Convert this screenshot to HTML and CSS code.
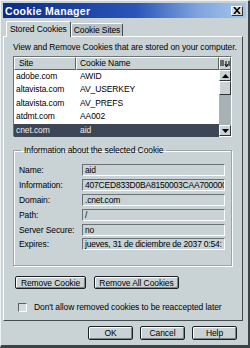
FILE: index.html
```html
<!DOCTYPE html>
<html lang="en">
  <head>
    <meta charset="UTF-8" />
    <meta name="viewport" content="width=device-width, initial-scale=1.0" />
    <title>Cookie Manager</title>

    <link rel="stylesheet" href="styles.css">
  </head>
  <body>
    <div class="window">
      <div class="titlebar">
        <span class="title">Cookie Manager</span>
        <span class="close">
          <svg width="8" height="7" viewBox="0 0 8 7">
            <path d="M1 0 L7 7 M7 0 L1 7" stroke="#000" stroke-width="1.6" />
          </svg>
        </span>
      </div>

      <div class="tabs">
        <div class="tab active">Stored Cookies</div>
        <div class="tab">Cookie Sites</div>
      </div>

      <div class="panel">
        <p class="intro">View and Remove Cookies that are stored on your computer.</p>

        <div class="list">
          <div class="rows">
            <div class="head">
              <span class="c1">Site</span>
              <span class="c2">Cookie Name</span>
            </div>
            <div class="row"><span class="c1">adobe.com</span><span class="c2">AWID</span></div>
            <div class="row"><span class="c1">altavista.com</span><span class="c2">AV_USERKEY</span></div>
            <div class="row"><span class="c1">altavista.com</span><span class="c2">AV_PREFS</span></div>
            <div class="row"><span class="c1">atdmt.com</span><span class="c2">AA002</span></div>
            <div class="row selected"><span class="c1">cnet.com</span><span class="c2">aid</span></div>
          </div>
          <div class="side">
            <div class="picker">
              <svg width="10" height="8" viewBox="0 0 10 8">
                <path d="M0 1 H4 M0 3 H4 M0 5 H4 M6 1 V6 M9 1 V6 M5 4 L6.5 7 L8 4" stroke="#000" stroke-width="1" fill="none" />
              </svg>
            </div>
            <div class="scroll">
              <div class="arrow">
                <svg width="7" height="4" viewBox="0 0 7 4"><path d="M0 4 L3.5 0 L7 4 Z" /></svg>
              </div>
              <div class="thumb"></div>
              <div class="track"></div>
              <div class="arrow">
                <svg width="7" height="4" viewBox="0 0 7 4"><path d="M0 0 L3.5 4 L7 0 Z" /></svg>
              </div>
            </div>
          </div>
        </div>

        <fieldset class="info">
          <legend>Information about the selected Cookie</legend>
          <div class="field"><span>Name:</span><div class="box">aid</div></div>
          <div class="field"><span>Information:</span><div class="box">407CED833D0BA8150003CAA70000000</div></div>
          <div class="field"><span>Domain:</span><div class="box">.cnet.com</div></div>
          <div class="field"><span>Path:</span><div class="box">/</div></div>
          <div class="field"><span>Server Secure:</span><div class="box">no</div></div>
          <div class="field"><span>Expires:</span><div class="box">jueves, 31 de diciembre de 2037 0:54:</div></div>
        </fieldset>

        <div class="actions">
          <button class="btn wide1">Remove Cookie</button>
          <button class="btn wide2">Remove All Cookies</button>
        </div>

        <label class="check"><span class="tick"></span>Don't allow removed cookies to be reaccepted later</label>
      </div>

      <div class="footer">
        <button class="btn small">OK</button>
        <button class="btn small">Cancel</button>
        <button class="btn small">Help</button>
      </div>
    </div>
  </body>
</html>
```

FILE: styles.css
```css
* {
  box-sizing: border-box;
}
body {
  margin: 0;
  font-family: "Liberation Sans", Arial, sans-serif;
  font-size: 8.5px;
  letter-spacing: -0.1px;
  color: #000;
  background: #c9d3d6;
}
.window {
  width: 250px;
  height: 348px;
  padding: 2px 2px 3px 2px;
  background: #c9d3d6;
  border-left: 1px solid #eef2f3;
  border-top: 1px solid #eef2f3;
  border-right: 2px solid #3c4448;
  border-bottom: 3px solid #3c4448;
}
.titlebar {
  height: 15px;
  display: flex;
  align-items: center;
  justify-content: space-between;
  padding: 0 3px 0 2px;
  background: linear-gradient(to right, #0c2c86 0%, #2a56b8 55%, #7ea4de 80%, #a8c4ec 100%);
}
.title {
  color: #fff;
  font-weight: bold;
  font-size: 10.5px;
  letter-spacing: 0.3px;
}
.close {
  width: 12px;
  height: 10px;
  display: flex;
  align-items: center;
  justify-content: center;
  background: #d4dadc;
  border: 1px solid;
  border-color: #fff #333 #333 #fff;
}
.tabs {
  display: flex;
  align-items: flex-end;
  height: 17px;
  padding-left: 3px;
  margin-top: 1px;
}
.tab {
  height: 13px;
  padding: 0 2px;
  line-height: 12px;
  background: #b8c2c6;
  border: 1px solid #fff;
  border-right-color: #454c50;
  border-bottom: none;
  border-radius: 2px 2px 0 0;
}
.tab.active {
  height: 16px;
  line-height: 15px;
  padding: 0 3px;
  margin-bottom: -1px;
  background: #c9d3d6;
  position: relative;
  z-index: 1;
}
.panel {
  height: 285px;
  padding: 4px 9px 0 9px;
  border: 1px solid #fff;
  border-right-color: #454c50;
  border-bottom-color: #454c50;
  margin-right: 3px;
}
.intro {
  margin: 0;
  height: 15px;
  line-height: 13px;
  white-space: nowrap;
}
.list {
  display: flex;
  width: 219px;
  height: 81px;
  border: 1px solid;
  border-color: #6a7276 #fff #fff #6a7276;
  background: #fff;
}
.rows {
  flex: 1;
  min-width: 0;
}
.head {
  display: flex;
  height: 13px;
  background: #c9d3d6;
  line-height: 11px;
}
.head span {
  border: 1px solid;
  border-color: #fff #5a6266 #5a6266 #fff;
  padding-left: 4px;
}
.head .c1 {
  width: 62px;
}
.head .c2 {
  flex: 1;
  padding-left: 3px;
}
.row {
  display: flex;
  height: 13.4px;
  line-height: 13px;
}
.row .c1 {
  width: 62px;
  padding-left: 2px;
}
.row .c2 {
  padding-left: 4px;
}
.row.selected {
  background: #3c4654;
  color: #e8ecee;
}
.side {
  width: 12px;
  display: flex;
  flex-direction: column;
  background: #c9d3d6;
}
.picker {
  height: 13px;
  display: flex;
  align-items: center;
  justify-content: center;
  border: 1px solid;
  border-color: #fff #5a6266 #5a6266 #fff;
}
.scroll {
  flex: 1;
  display: flex;
  flex-direction: column;
  background: #a8b2b6;
}
.arrow {
  height: 11px;
  display: flex;
  align-items: center;
  justify-content: center;
  background: #c9d3d6;
  border: 1px solid;
  border-color: #fff #333 #333 #fff;
}
.thumb {
  height: 14px;
  background: #c9d3d6;
  border: 1px solid;
  border-color: #fff #333 #333 #fff;
}
.track {
  flex: 1;
}
.info {
  margin: 8px 0 0 0;
  width: 219px;
  min-width: 0;
  height: 121px;
  padding: 8px 6px 0 5px;
  border: 1px solid #9aa4a8;
  box-shadow: 1px 1px 0 #fff, inset 1px 1px 0 #fff;
}
.info legend {
  padding: 0 3px;
  margin-left: 2px;
}
.field {
  display: flex;
  align-items: center;
  height: 14.8px;
}
.field span {
  width: 63px;
  flex: none;
}
.box {
  flex: 1;
  min-width: 0;
  height: 12px;
  line-height: 10px;
  padding-left: 2px;
  overflow: hidden;
  white-space: nowrap;
  letter-spacing: -0.2px;
  border: 1px solid;
  border-color: #6a7276 #fff #fff #6a7276;
}
.actions {
  display: flex;
  gap: 8px;
  margin-top: 10px;
  padding-left: 2px;
}
.btn {
  height: 13px;
  padding: 0;
  font-family: "Liberation Sans", Arial, sans-serif;
  font-size: 8.5px;
  letter-spacing: -0.1px;
  color: #000;
  background: #c9d3d6;
  border: 1px solid #1c2024;
  border-radius: 2px;
  box-shadow: inset 1px 1px 0 #fff, inset -1px -1px 0 #7a8286;
}
.wide1 {
  width: 71px;
}
.wide2 {
  width: 85px;
}
.check {
  display: flex;
  align-items: center;
  margin-top: 13px;
  padding-left: 5px;
  white-space: nowrap;
}
.tick {
  width: 9px;
  height: 9px;
  margin-right: 7px;
  background: #d6dcde;
  border: 1px solid;
  border-color: #5a6266 #fff #fff #5a6266;
}
.footer {
  display: flex;
  justify-content: flex-end;
  gap: 7px;
  padding: 5px 9px 0 0;
}
.small {
  width: 45px;
  height: 14px;
}
```
